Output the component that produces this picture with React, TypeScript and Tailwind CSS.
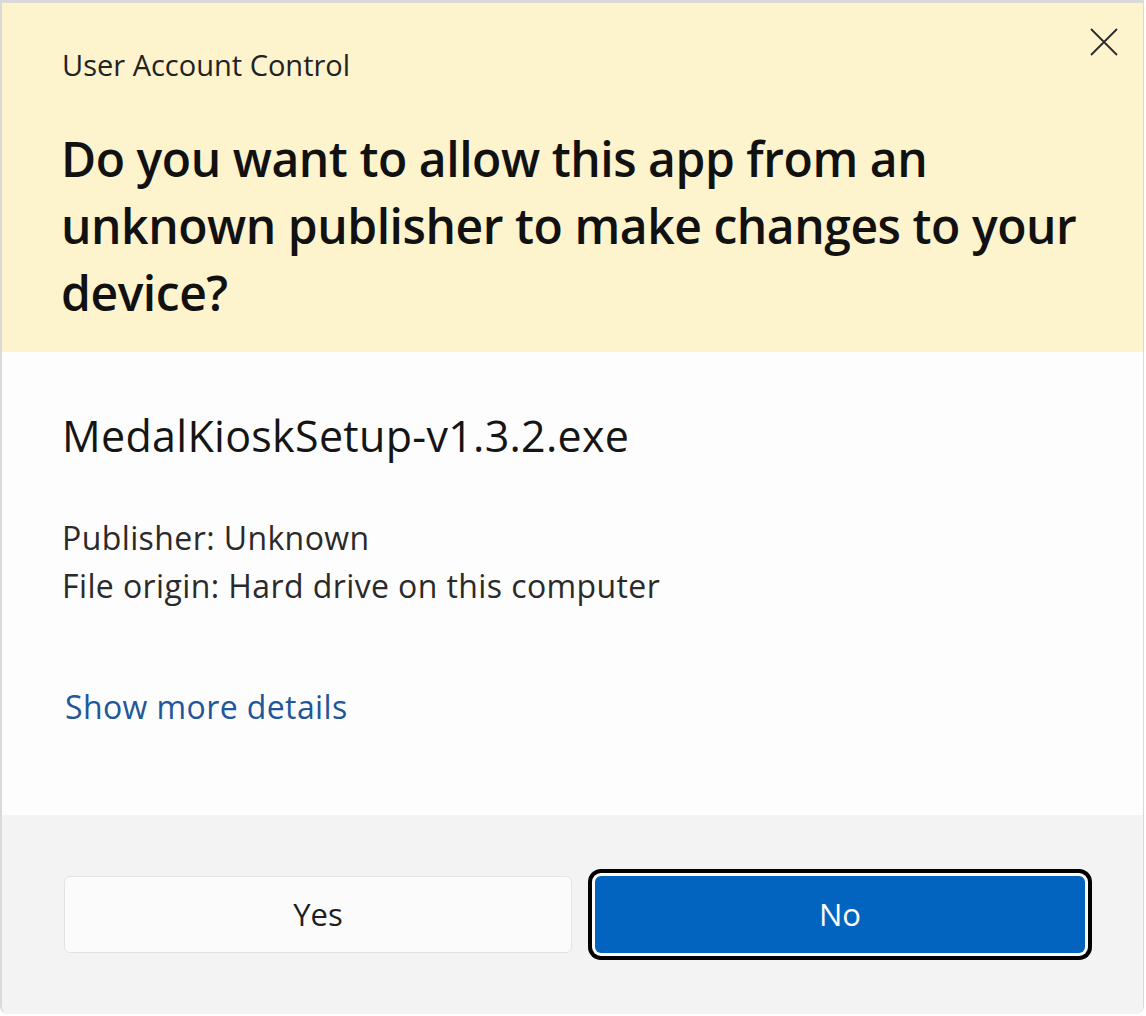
export default function App() {
  return (
    <div className="w-[1146px] h-[1016px] overflow-hidden bg-white">
      <div
        className="w-[1144px] h-[1014px] flex flex-col border-l-2 border-t-[3px] border-r border-[#d9d9d9] rounded-b-lg overflow-hidden text-[#1b1b1b]"
        style={{ fontFamily: '"Open Sans", "Noto Sans", sans-serif' }}
      >
        {/* Warning header */}
        <div className="relative bg-[#fdf3cd] pl-[60px] pt-[44px] pb-[26px]">
          <p className="text-[29px] leading-[36px] text-[#222]">User Account Control</p>
          <h1 className="mt-[42px] -ml-[1px] text-[48px] leading-[67px] font-semibold text-[#111] tracking-[-0.45px]">
            Do you want to allow this app from an
            <br />
            unknown publisher to make changes to your
            <br />
            device?
          </h1>
          <button className="absolute top-[25px] right-[25px] w-[28px] h-[28px] flex items-center justify-center">
            <svg viewBox="0 0 28 28" className="w-[28px] h-[28px]" fill="none" stroke="#2a2a2a" strokeWidth="1.8">
              <path d="M1 1 L27 27 M27 1 L1 27" />
            </svg>
          </button>
        </div>

        {/* Details */}
        <div className="flex-1 bg-[#fdfdfd] pl-[60px] pt-[57px]">
          <p className="text-[43px] leading-[54px] text-[#151515] tracking-[0.3px]">MedalKioskSetup-v1.3.2.exe</p>
          <div className="mt-[51px] text-[32px] leading-[48px] text-[#2a2a2a] tracking-[0.4px]">
            <p>Publisher: Unknown</p>
            <p>File origin: Hard drive on this computer</p>
          </div>
          <a href="#" className="block mt-[73px] pl-[3px] text-[32px] leading-[48px] text-[#22569a] tracking-[0.4px]">
            Show more details
          </a>
        </div>

        {/* Buttons */}
        <div className="h-[199px] bg-[#f3f3f3] pl-[62px] pt-[61px] flex gap-[23px]">
          <button className="w-[508px] h-[77px] rounded-md border border-[#e3e3e3] bg-[#fbfbfb] text-[31px] text-[#1e1e1e]">
            Yes
          </button>
          <button className="w-[490px] h-[77px] rounded-md bg-[#0364c0] text-[31px] text-white shadow-[0_0_0_3px_#ffffff,0_0_0_7px_#000000]">
            No
          </button>
        </div>
      </div>
    </div>
  );
}
